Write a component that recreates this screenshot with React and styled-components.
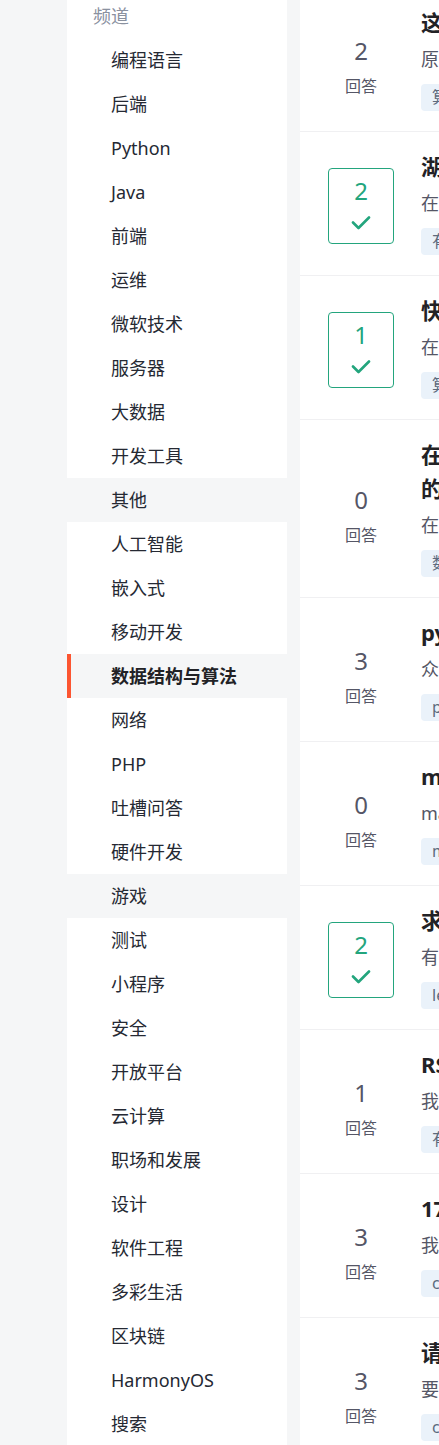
import React from "react";
import styled, { createGlobalStyle } from "styled-components";

const GlobalStyle = createGlobalStyle`
  html, body {
    margin: 0;
    padding: 0;
    background: #f5f6f7;
    overflow: hidden;
  }

  body {
    font-family: "Noto Sans", "Noto Sans CJK SC", sans-serif;
  }
`;

const Page = styled.div`
  display: flex;
  flex-direction: row;
  align-items: flex-start;
  gap: 13px;
  padding-left: 67px;
  width: 1300px;
`;

const Sidebar = styled.nav`
  width: 220px;
  flex-shrink: 0;
  background: #ffffff;
`;

const SideTitle = styled.div`
  padding-left: 26px;
  height: 38px;
  line-height: 32px;
  font-size: 18px;
  color: #8a919f;
`;

const ChannelList = styled.ul`
  list-style: none;
  margin: 0;
  padding: 0;
`;

const Channel = styled.li`
  position: relative;
  height: 44px;
  line-height: 44px;
  padding-left: 44px;
  font-size: 18px;
  color: ${(p) => (p.$active ? "#222226" : "#252933")};
  font-weight: ${(p) => (p.$active ? 700 : 400)};
  background: ${(p) => (p.$active || p.$hover ? "#f5f6f7" : "#ffffff")};
  cursor: pointer;

  &::before {
    content: "";
    display: ${(p) => (p.$active ? "block" : "none")};
    position: absolute;
    left: 0;
    top: 0;
    bottom: 0;
    width: 4px;
    background: #fc5531;
  }
`;

const Main = styled.main`
  width: 900px;
  flex-shrink: 0;
  background: #ffffff;
  margin-top: -12px;
`;

const Question = styled.div`
  display: flex;
  flex-direction: row;
  padding: 17px 24px 20px 28px;
  border-bottom: 1px solid #f0f0f2;
`;

const Stats = styled.div`
  box-sizing: border-box;
  width: 66px;
  height: 76px;
  flex-shrink: 0;
  align-self: center;
  margin-top: ${(p) => (p.$accepted ? "8px" : "16px")};
  margin-right: 27px;
  padding-top: 7px;
  border: 1px solid ${(p) => (p.$accepted ? "#23a57d" : "transparent")};
  border-radius: 4px;
  display: flex;
  flex-direction: column;
  align-items: center;
  color: ${(p) => (p.$accepted ? "#23a57d" : "#555666")};
`;

const Count = styled.div`
  font-size: 24px;
  line-height: 30px;
`;

const CountLabel = styled.div`
  margin-top: 3px;
  font-size: 16px;
  line-height: 34px;
`;

const CheckWrap = styled.div`
  height: 34px;
  display: flex;
  align-items: center;
  justify-content: center;
`;

const Body = styled.div`
  flex: 1;
  min-width: 0;
`;

const Title = styled.h3`
  margin: 0;
  font-size: 22px;
  line-height: 34px;
  font-weight: 700;
  color: #222226;
`;

const Excerpt = styled.p`
  margin: 4px 0 0 0;
  font-size: 18px;
  line-height: 32px;
  color: #555666;
  white-space: nowrap;
  overflow: hidden;
  text-overflow: ellipsis;
`;

const Tags = styled.div`
  display: flex;
  gap: 8px;
  margin-top: 9px;
`;

const Tag = styled.span`
  display: inline-block;
  height: 27px;
  line-height: 27px;
  padding: 0 11px;
  border-radius: 4px;
  background: #eaf2fa;
  color: #5c6b7e;
  font-size: 16px;
`;

const Check = () => (
  <svg width="20" height="14" viewBox="0 0 20 14" fill="none">
    <path
      d="M2 6.5 L7.5 12 L18 1.5"
      stroke="#23a57d"
      strokeWidth="2.6"
      strokeLinecap="round"
      strokeLinejoin="round"
    />
  </svg>
);

const channels = [
  "编程语言", "后端", "Python", "Java", "前端", "运维", "微软技术", "服务器",
  "大数据", "开发工具", "其他", "人工智能", "嵌入式", "移动开发", "数据结构与算法",
  "网络", "PHP", "吐槽问答", "硬件开发", "游戏", "测试", "小程序", "安全",
  "开放平台", "云计算", "职场和发展", "设计", "软件工程", "多彩生活", "区块链",
  "HarmonyOS", "搜索",
];

const questions = [
  { n: 2, ok: false, title: "这段代码的运行结果为什么和预期不一样？", text: "原题是这样的：给定一个整数数组，找出其中和最大的连续子数组", tags: ["算法", "c++"] },
  { n: 2, ok: true, title: "湖南大学OJ平台一道题目求解答", text: "在做这道题的时候一直提示答案错误，不知道哪里出了问题", tags: ["有问必答", "c语言"] },
  { n: 1, ok: true, title: "快速排序递归实现出现栈溢出", text: "在对十万个数据进行排序的时候程序直接崩溃了", tags: ["算法", "排序算法"] },
  { n: 0, ok: false, title: "在使用动态规划求解最长公共子序列问题时，如何输出所有的最长公共子序列的具体方案以及空间优化", text: "在网上查了很多资料都只能输出一个结果", tags: ["数据结构", "动态规划"] },
  { n: 3, ok: false, title: "python 实现二叉树的层序遍历", text: "众所周知二叉树的层序遍历需要借助队列来完成", tags: ["python", "二叉树"] },
  { n: 0, ok: false, title: "matlab 如何求解非线性方程组", text: "matlab 中使用 fsolve 函数求解时一直不收敛", tags: ["matlab", "算法"] },
  { n: 2, ok: true, title: "求一个链表反转的思路", text: "有没有人能讲一下反转链表的迭代和递归两种写法", tags: ["leetcode", "链表"] },
  { n: 1, ok: false, title: "RSA 加密算法中大数运算的实现", text: "我用 long long 存储数据但是结果溢出了", tags: ["有问必答", "密码学"] },
  { n: 3, ok: false, title: "17 个人围成一圈报数的问题", text: "我写的约瑟夫环程序输出结果不对", tags: ["c语言", "数据结构"] },
  { n: 3, ok: false, title: "请问如何用栈实现表达式求值", text: "要求支持加减乘除和括号运算", tags: ["c++", "栈"] },
];

const App = () => {
  return (
    <>
      <GlobalStyle />
      <Page>
        <Sidebar>
          <SideTitle>频道</SideTitle>
          <ChannelList>
            {channels.map((c) => (
              <Channel
                key={c}
                $active={c === "数据结构与算法"}
                $hover={c === "其他" || c === "游戏"}
              >
                {c}
              </Channel>
            ))}
          </ChannelList>
        </Sidebar>
        <Main>
          {questions.map((q, i) => (
            <Question key={i}>
              <Stats $accepted={q.ok}>
                <Count>{q.n}</Count>
                {q.ok ? (
                  <CheckWrap>
                    <Check />
                  </CheckWrap>
                ) : (
                  <CountLabel>回答</CountLabel>
                )}
              </Stats>
              <Body>
                <Title>{q.title}</Title>
                <Excerpt>{q.text}</Excerpt>
                <Tags>
                  {q.tags.map((t) => (
                    <Tag key={t}>{t}</Tag>
                  ))}
                </Tags>
              </Body>
            </Question>
          ))}
        </Main>
      </Page>
    </>
  );
};

export default App;
